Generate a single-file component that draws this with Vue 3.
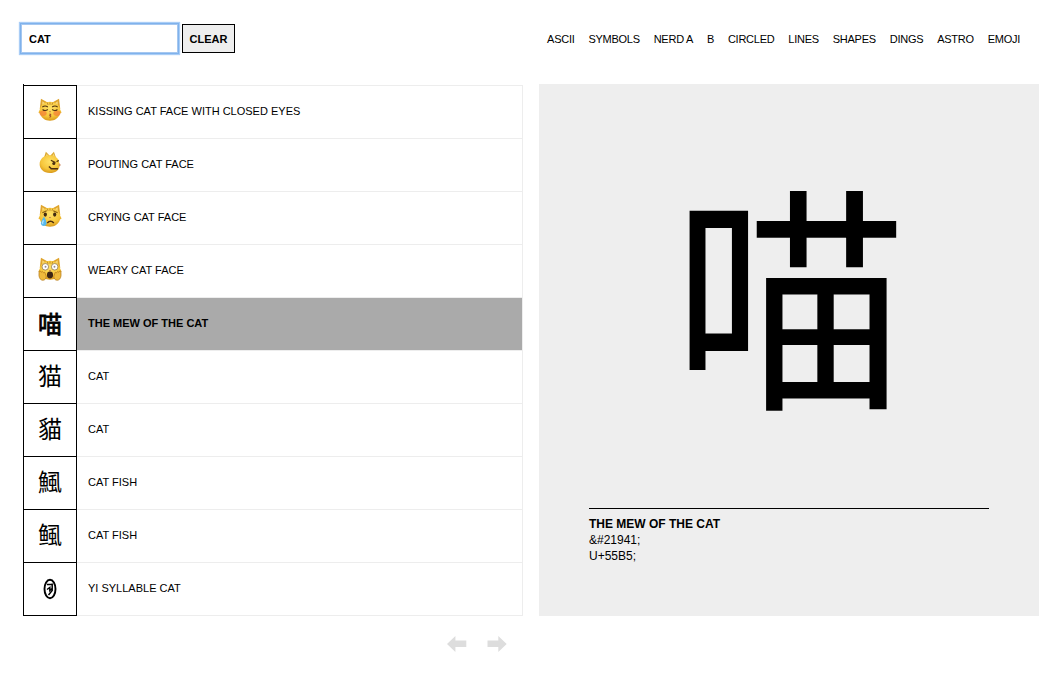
<script setup>
const nav = ['ASCII', 'SYMBOLS', 'NERD A', 'B', 'CIRCLED', 'LINES', 'SHAPES', 'DINGS', 'ASTRO', 'EMOJI']
const rows = [
  { face: 'kiss', name: 'KISSING CAT FACE WITH CLOSED EYES' },
  { face: 'pout', name: 'POUTING CAT FACE' },
  { face: 'cry', name: 'CRYING CAT FACE' },
  { face: 'weary', name: 'WEARY CAT FACE' },
  { glyph: '喵', name: 'THE MEW OF THE CAT', active: true },
  { glyph: '猫', name: 'CAT' },
  { glyph: '貓', name: 'CAT' },
  { glyph: '鯴', name: 'CAT FISH' },
  { glyph: '鲺', name: 'CAT FISH' },
  { face: 'yi', name: 'YI SYLLABLE CAT' },
]
</script>

<template>
  <div class="page">
    <header class="top">
      <div class="search">
        <input class="field" type="text" value="CAT" />
        <button class="clear">CLEAR</button>
      </div>
      <nav class="nav">
        <a v-for="n in nav" :key="n">{{ n }}</a>
      </nav>
    </header>

    <main class="main">
      <section class="left">
        <div class="list">
          <div v-for="(r, i) in rows" :key="i" class="row" :class="{ active: r.active }">
            <div class="cell">
              <span v-if="r.glyph" class="glyph">{{ r.glyph }}</span>
              <svg v-else-if="r.face === 'yi'" class="yi" viewBox="0 0 14 22" fill="none" stroke="#000">
                <ellipse cx="7" cy="11" rx="5.5" ry="9.2" stroke-width="1.9" />
                <path d="M4 6.5H9M9.2 5.5V12.5L5.5 17M4 11.5L6.8 9.5V12.5L9 10.5" stroke-width="1.5" />
              </svg>
              <svg v-else class="face" viewBox="0 0 22 22">
                <defs>
                  <radialGradient :id="'fur' + i" cx=".5" cy=".35" r=".65">
                    <stop offset="0" stop-color="#ffe268" />
                    <stop offset=".65" stop-color="#f6c63b" />
                    <stop offset="1" stop-color="#d99a1c" />
                  </radialGradient>
                </defs>
                <template v-if="r.face === 'pout'">
                  <path d="M5 7.5L7.2.8 11 4.5 14.6.6 17 7.5Z" fill="#dba832" />
                  <path d="M7 5.5L8 2.5 10 5ZM13 5L14.4 2.2 15.6 6Z" fill="#f7d777" />
                  <path d="M11 4C16.5 4 19.2 7.5 19.4 11 20.6 12 20.8 13 19.8 14 19 18 16 20.2 11 20.2 5 20.2 1.5 16.5 1.5 12.2 1.5 7.6 5 4 11 4Z" :fill="`url(#fur${i})`" />
                  <path d="M11.8 8.5L16 10.6M17 9.8L19 8.6" stroke="#59380c" stroke-width="1.2" />
                  <circle cx="14.5" cy="11.5" r="1.4" fill="#4b2e12" />
                  <path d="M11.5 16.3H18.3M10 14.2L12 16" stroke="#4c2d10" stroke-width="1.4" fill="none" />
                  <circle cx="19.8" cy="12.8" r=".9" fill="#c78a80" />
                </template>
                <template v-else>
                  <path d="M1.6 10L2.7.6 8.5 4H13.5L19.3.6 20.4 10Z" fill="#dfa42c" />
                  <path d="M3.8 6.5L4 3 7 5ZM15 5L18 3 18.2 6.5Z" fill="#f8d777" />
                  <path d="M11 3.4C16.5 3.4 19.8 7 20.3 10.5L21.6 13.2 20.2 14.2C19 18.5 15.4 20.8 11 20.8S3 18.5 1.8 14.2L.4 13.2 1.7 10.5C2.2 7 5.5 3.4 11 3.4Z" :fill="`url(#fur${i})`" />
                  <path d="M8.5 4.2L9.2 6.3M11 4V6.2M13.5 4.2L12.8 6.3" stroke="#b98224" stroke-width=".8" />
                </template>
                <g v-if="r.face === 'kiss'">
                  <ellipse cx="4.7" cy="14" rx="3.2" ry="2.5" fill="#f47e38" opacity=".7" />
                  <ellipse cx="17.3" cy="14" rx="3.2" ry="2.5" fill="#f47e38" opacity=".7" />
                  <path d="M4 8.2Q6.5 6.5 9 8.2M13 8.2Q15.5 6.5 18 8.2M4.2 10.5Q6.5 12.4 9 10.5M13 10.5Q15.5 12.4 17.8 10.5" fill="none" stroke="#4c3010" />
                  <path d="M10 12.2H12L11 13.2Z" fill="#b76052" />
                  <path d="M10.5 14.8Q12.7 15.2 11 16 12.7 16.8 10.5 17.6" fill="none" stroke="#a0502c" />
                </g>
                <g v-if="r.face === 'cry'">
                  <path d="M4 8L8 6.3M18 8L14 6.3" stroke="#855b14" />
                  <ellipse cx="6.7" cy="9.7" rx="1.5" ry="1.9" fill="#432c12" />
                  <ellipse cx="15.3" cy="9.7" rx="1.5" ry="1.9" fill="#432c12" />
                  <path d="M10 12H12L11 13Z" fill="#b76052" />
                  <path d="M8.5 17.4Q11.5 14.2 14.5 17.4" fill="none" stroke="#4c2d10" stroke-width="1.5" />
                  <path d="M5.5 11.5Q8 15.5 8 18A2.8 2.8 0 0 1 2.6 18Q2.8 15.3 5.5 11.5Z" fill="#56b8ec" />
                  <path d="M5 15Q3.7 17 4.5 18.3" stroke="#c9efff" fill="none" />
                </g>
                <g v-if="r.face === 'weary'">
                  <circle cx="6.7" cy="9" r="3" fill="#fff" stroke="#8f744a" stroke-width=".7" />
                  <circle cx="15.3" cy="9" r="3" fill="#fff" stroke="#8f744a" stroke-width=".7" />
                  <circle cx="6.9" cy="9" r=".9" fill="#8f8990" />
                  <circle cx="15.1" cy="9" r=".9" fill="#8f8990" />
                  <path d="M10 12H12L11 13Z" fill="#b76052" />
                  <ellipse cx="11" cy="16.5" rx="2.8" ry="3.1" fill="#3d2616" />
                  <path d="M1 13Q2.2 12.2 3 14L4 13.2 5 14.5 6.2 14 7.5 17.5Q7.5 21.3 4.2 21.3 1.4 21 .9 17ZM21 13Q19.8 12.2 19 14L18 13.2 17 14.5 15.8 14 14.5 17.5Q14.5 21.3 17.8 21.3 20.6 21 21.1 17Z" fill="#efba3c" stroke="#b77b1d" stroke-width=".7" />
                </g>
              </svg>
            </div>
            <div class="name">{{ r.name }}</div>
          </div>
        </div>
        <div class="pager">
          <svg viewBox="0 0 20 16"><path d="M0 8L8.4 0V4.6H19.3V11H8.4V16Z" /></svg>
          <svg viewBox="0 0 20 16"><path d="M19.7 8L11.3 0V4.6H.5V11H11.3V16Z" /></svg>
        </div>
      </section>

      <section class="detail">
        <div class="big"><span>喵</span></div>
        <div class="info">
          <strong>THE MEW OF THE CAT</strong>
          <div>&amp;#21941;</div>
          <div>U+55B5;</div>
        </div>
      </section>
    </main>
  </div>
</template>

<style>
body { background: #fff; }
</style>

<style scoped>
* { box-sizing: border-box; }
.page { width: 1064px; height: 682px; overflow: hidden; color: #000; font: 11px/16px "Liberation Sans", "Noto Sans CJK SC", sans-serif; }
.top { height: 84px; padding: 24px 44px 0 21px; display: flex; justify-content: space-between; }
.search { display: flex; gap: 4px; }
.field { width: 157px; height: 29px; margin: 0; padding: 1px 0 0 7px; border: 1px solid #a5c7f0; outline: 0; background: #fff; box-shadow: 0 0 0 1px #7fb2ec, 0 0 1px 2px #a9cdf6; font: bold 11px "Liberation Sans", sans-serif; color: #000; }
.clear { width: 53px; height: 29px; margin: 0; padding: 1px 0 0; border: 1px solid #000; border-radius: 0; background: #eee; font: bold 11px "Liberation Sans", sans-serif; color: #000; }
.nav { display: flex; gap: 13.85px; padding-top: 7px; white-space: nowrap; letter-spacing: -0.25px; }
.main { display: flex; gap: 16px; padding-left: 23px; }
.left { width: 500px; }
.list { padding-top: 1px; height: 532px; border-left: 1px solid #000; }
.row { display: flex; height: 53px; border-top: 1px solid #ededed; border-right: 1px solid #ededed; }
.row:last-child { height: 54px; border-bottom: 1px solid #ededed; }
.cell { width: 53px; margin: -1px 0 0; border-top: 1px solid #000; border-right: 1px solid #000; display: flex; justify-content: center; align-items: center; }
.row:last-child .cell { margin-bottom: -1px; border-bottom: 1px solid #000; }
.name { flex: 1; padding: 17px 0 0 11px; }
.active .name { background: #aaa; font-weight: bold; }
.glyph { font: 24px/52px "Noto Sans CJK SC", sans-serif; margin-top: -5px; }
.active .glyph { -webkit-text-stroke: 0.8px #000; margin-top: -3px; }
.face { width: 24px; height: 24px; margin-top: -4px; }
.yi { width: 14px; height: 22px; }
.pager { display: flex; justify-content: flex-end; gap: 20px; padding: 20px 16px 0 0; }
.pager svg { width: 20px; height: 16px; fill: #ddd; }
.detail { width: 500px; height: 532px; background: #eee; padding: 0 50px; }
.big { height: 424px; display: flex; justify-content: center; font: 400 234px/424px "Noto Sans CJK SC", sans-serif; }
.big span { transform: translate(0.5px, -10px) scaleY(1.03); }
.info { border-top: 1px solid #000; padding-top: 7px; font-size: 12px; }
.info strong { display: block; }
</style>
